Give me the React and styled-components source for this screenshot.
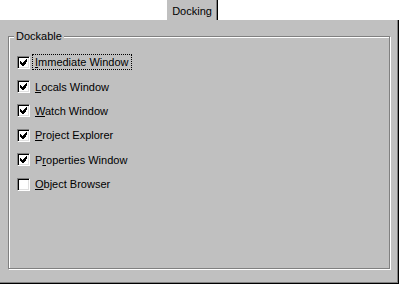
import React from 'react'
import styled, { createGlobalStyle } from 'styled-components'

const GlobalStyle = createGlobalStyle`
    body {
        margin: 0;
        background: #fff;
        font-family: "Liberation Sans", Arial, sans-serif;
        font-size: 11px;
        color: #000;
    }
`

const items = [
    { label: 'Immediate Window', key: 0, checked: true, focused: true },
    { label: 'Locals Window', key: 0, checked: true },
    { label: 'Watch Window', key: 0, checked: true },
    { label: 'Project Explorer', key: 0, checked: true },
    { label: 'Properties Window', key: 1, checked: true },
    { label: 'Object Browser', key: 0, checked: false },
]

const CheckMark = () => (
    <svg width="7" height="7" viewBox="0 0 7 7" shapeRendering="crispEdges">
        <path fill="#000" d="M6 0h1v3h-1zM5 1h1v4h-1zM4 2h1v4h-1zM3 3h1v4h-1zM2 4h1v3h-1zM1 3h1v3h-1zM0 2h1v3h-1z" />
    </svg>
)

const Mnemonic = ({ text, at }) => (
    <>
        {text.slice(0, at)}
        <u>{text[at]}</u>
        {text.slice(at + 1)}
    </>
)

const App = () => {
    return (
        <Screen>
            <GlobalStyle />
            <TabStrip>
                <Tab>Docking</Tab>
            </TabStrip>
            <Panel>
                <Group>
                    <Legend>Dockable</Legend>
                    <List>
                        {items.map((it, i) => (
                            <Row key={`row${i}`}>
                                <Box>{it.checked && <CheckMark />}</Box>
                                <Label focused={it.focused}>
                                    <Mnemonic text={it.label} at={it.key} />
                                </Label>
                            </Row>
                        ))}
                    </List>
                </Group>
            </Panel>
        </Screen>
    )
}

export default App

const Screen = styled.div`
    width: 400px;
    height: 285px;
    display: flex;
    flex-direction: column;
`

const TabStrip = styled.div`
    height: 20px;
    display: flex;
    padding-left: 167px;
`

const Tab = styled.div`
    width: 51px;
    height: 20px;
    background: #c0c0c0;
    border-right: 1px solid #000;
    box-shadow: inset -1px 0 #808080;
    display: flex;
    align-items: center;
    justify-content: center;
    padding-top: 1px;
    box-sizing: border-box;
`

const Panel = styled.div`
    width: 399px;
    height: 264px;
    box-sizing: border-box;
    background: #c0c0c0;
    border-right: 1px solid #000;
    border-bottom: 1px solid #000;
    box-shadow: inset -1px -1px #808080;
    padding: 16px 0 0 8px;
`

const Group = styled.div`
    position: relative;
    width: 382px;
    height: 233px;
    box-sizing: border-box;
    border: 1px solid #808080;
    box-shadow: inset 1px 1px #fff, 1px 1px #fff;
`

const Legend = styled.span`
    position: absolute;
    top: -8px;
    left: 5px;
    padding: 0 2px;
    background: #c0c0c0;
    line-height: 14px;
`

const List = styled.div`
    display: flex;
    flex-direction: column;
    padding: 13px 0 0 8px;
`

const Row = styled.div`
    display: flex;
    align-items: center;
    height: 24.4px;
`

const Box = styled.div`
    width: 13px;
    height: 13px;
    box-sizing: border-box;
    background: #fff;
    border-top: 1px solid #808080;
    border-left: 1px solid #808080;
    border-bottom: 1px solid #fff;
    border-right: 1px solid #fff;
    box-shadow: inset 1px 1px #000, inset -1px -1px #dfdfdf;
    display: flex;
    padding: 2px 0 0 2px;
`

const Label = styled.span`
    margin-left: 3px;
    padding: 0 2px;
    line-height: 14px;
    outline: ${p => (p.focused ? '1px dotted #000' : 'none')};
    u {
        text-decoration-thickness: 1px;
        text-underline-offset: 1px;
    }
`
